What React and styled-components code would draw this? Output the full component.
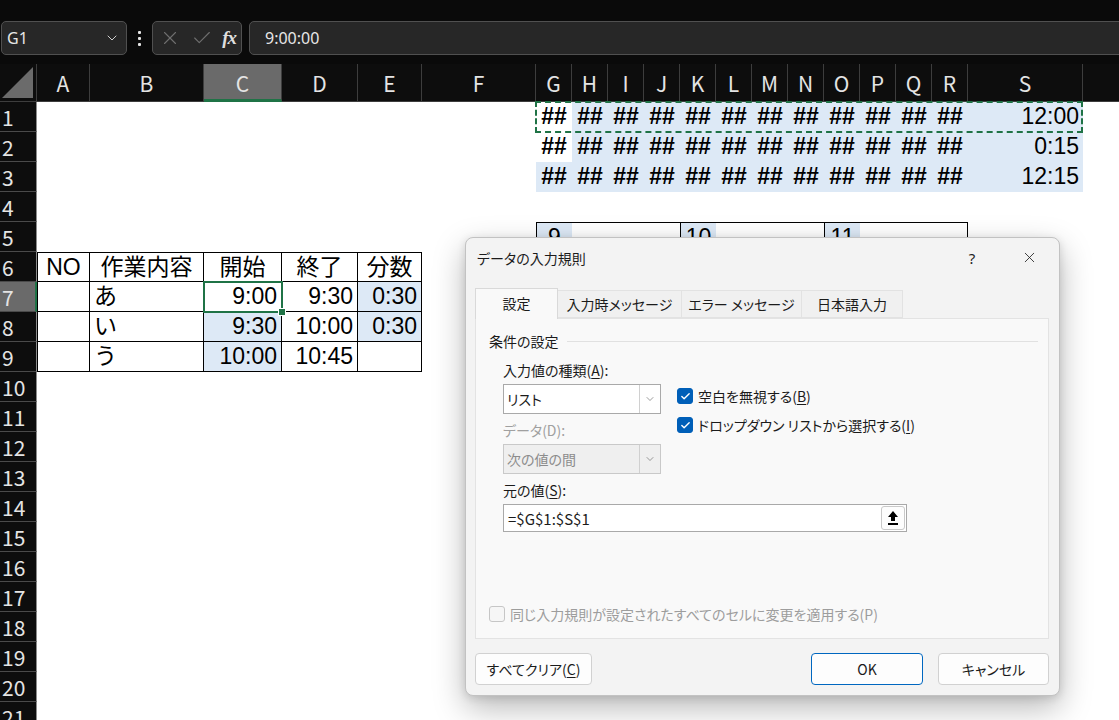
import React from 'react';
import styled, { createGlobalStyle } from 'styled-components';
import { X, Check, ChevronDown } from 'lucide-react';

const BLUE = '#dde9f6';
const GREEN = '#1f7346';
const UI_FONT = '"Noto Sans CJK JP", "Noto Sans", sans-serif';
const CELL_FONT = '"Liberation Sans", "Noto Sans CJK JP", sans-serif';

const Global = createGlobalStyle`
  html, body { margin: 0; padding: 0; background: #0a0a0a; }
  body { width: 1119px; height: 720px; overflow: hidden; font-family: ${UI_FONT}; }
`;

const Page = styled.div`
  position: relative;
  width: 1119px;
  height: 720px;
  overflow: hidden;
  background: #0a0a0a;
  display: flex;
  flex-direction: column;
`;

/* ---------- formula bar ---------- */
const FormulaBar = styled.div`
  display: flex;
  align-items: center;
  height: 34px;
  margin-top: 21px;
  padding-left: 1px;
`;

const Box = styled.div`
  box-sizing: border-box;
  height: 34px;
  background: #272727;
  border: 1px solid #505050;
  border-radius: 5px;
  display: flex;
  align-items: center;
  color: #e6e6e6;
`;

const NameBox = styled(Box)`
  width: 126px;
  justify-content: space-between;
  padding: 0 6px 0 5px;
  font: 16px "Noto Sans", sans-serif;
`;

const Dots = styled.div`
  width: 25px;
  display: flex;
  flex-direction: column;
  align-items: center;
  gap: 3px;
  span { width: 3px; height: 3px; background: #e6e6e6; border-radius: 1px; }
`;

const FxBox = styled(Box)`
  width: 90px;
  justify-content: space-between;
  padding: 0 5px 0 6px;
`;

const Fx = styled.span`
  font: italic bold 19px "Liberation Serif", serif;
  color: #dedede;
  letter-spacing: -1px;
`;

const FormulaInput = styled(Box)`
  flex: 1;
  margin-left: 7px;
  margin-right: -10px;
  padding-left: 15px;
  font: 16px "Noto Sans", sans-serif;
`;

/* ---------- sheet ---------- */
const COLS = ['A', 'B', 'C', 'D', 'E', 'F', 'G', 'H', 'I', 'J', 'K', 'L', 'M', 'N', 'O', 'P', 'Q', 'R', 'S', 'T'];
const WIDTHS = [53, 114, 78, 76, 64, 114, ...Array(12).fill(36), 115, 100];
const ROWS = Array.from({ length: 21 }, (_, i) => i + 1);

const Sheet = styled.div`
  margin-top: 9px;
  display: grid;
  grid-template-columns: 37px ${WIDTHS.map((w) => `${w}px`).join(' ')};
  grid-template-rows: 38px repeat(21, 30px);
  background: #fff;
`;

const Placed = styled.div`
  grid-column: ${(p) => p.$c};
  grid-row: ${(p) => p.$r};
`;

const Corner = styled(Placed)`
  background: #0d0d0d;
  border-right: 1px solid #3d3d3d;
  border-bottom: 1px solid #3d3d3d;
  display: flex;
  align-items: flex-end;
  justify-content: flex-end;
  padding: 0 3px 3px 0;
  &::after {
    content: '';
    width: 31px;
    height: 31px;
    background: #6b6b6b;
    clip-path: polygon(100% 0, 100% 100%, 0 100%);
  }
`;

const ColHead = styled(Placed)`
  box-sizing: border-box;
  background: ${(p) => (p.$sel ? '#6a6a6a' : '#0d0d0d')};
  border-right: 1px solid #3d3d3d;
  border-bottom: ${(p) => (p.$sel ? `3px solid ${GREEN}` : '1px solid #3d3d3d')};
  color: #e4e4e4;
  font: 21px ${UI_FONT};
  display: flex;
  align-items: center;
  justify-content: center;
  padding-top: ${(p) => (p.$sel ? '2px' : '0')};
  overflow: hidden;
`;

const RowHead = styled(Placed)`
  box-sizing: border-box;
  background: ${(p) => (p.$sel ? '#6a6a6a' : '#0d0d0d')};
  border-bottom: 1px solid #4a4a4a;
  border-right: ${(p) => (p.$sel ? `2px solid ${GREEN}` : '1px solid #8c8c8c')};
  color: #e4e4e4;
  font: 21px/28px ${UI_FONT};
  padding-left: 2px;
  display: flex;
  align-items: center;
`;

const Cell = styled(Placed)`
  box-sizing: border-box;
  background: ${(p) => p.$bg || '#fff'};
  border-top: ${(p) => (p.$bt ? '1px solid #000' : 'none')};
  border-bottom: ${(p) => (p.$bb ? '1px solid #000' : 'none')};
  border-left: ${(p) => (p.$bl ? '1px solid #000' : 'none')};
  border-right: ${(p) => (p.$br ? '1px solid #000' : 'none')};
  font: ${(p) => (p.$bold ? 'bold ' : '')}23px/29px ${CELL_FONT};
  color: #000;
  text-align: ${(p) => p.$align || 'left'};
  padding: 0 4px;
  white-space: nowrap;
  overflow: hidden;
`;

const MarchingAnts = styled.div`
  grid-column: 8 / 21;
  grid-row: 2 / 3;
  border: 2px dashed ${GREEN};
  margin: -1px 0 -1px -1px;
  pointer-events: none;
  z-index: 1;
`;

const ActiveCell = styled.div`
  grid-column: 4 / 5;
  grid-row: 8 / 9;
  border: 2px solid ${GREEN};
  margin: -1px;
  position: relative;
  z-index: 2;
  &::after {
    content: '';
    position: absolute;
    right: -5px;
    bottom: -5px;
    width: 6px;
    height: 6px;
    background: ${GREEN};
    border: 1px solid #fff;
  }
`;

const cells = {};
const GR = COLS.slice(6, 18);
[1, 2, 3].forEach((r) =>
  GR.forEach((c) => {
    cells[c + r] = { t: '##', align: 'center', bold: true, bg: c === 'G' && r < 3 ? null : BLUE };
  })
);
cells.S1 = { t: '12:00', align: 'right', bg: BLUE };
cells.S2 = { t: '0:15', align: 'right', bg: BLUE };
cells.S3 = { t: '12:15', align: 'right', bg: BLUE };

GR.forEach((c) => {
  cells[c + 5] = { bt: true };
});
cells.G5 = { t: '9', align: 'center', bg: BLUE, bt: true, bl: true };
cells.K5 = { t: '10', align: 'center', bg: BLUE, bt: true, bl: true };
cells.O5 = { t: '11', align: 'center', bg: BLUE, bt: true, bl: true };
cells.R5 = { bt: true, br: true };

const table = {
  6: [['NO', 'center'], ['作業内容', 'center'], ['開始', 'center'], ['終了', 'center'], ['分数', 'center']],
  7: [['', 'left'], ['あ', 'left'], ['9:00', 'right'], ['9:30', 'right'], ['0:30', 'right', BLUE]],
  8: [['', 'left'], ['い', 'left'], ['9:30', 'right', BLUE], ['10:00', 'right'], ['0:30', 'right', BLUE]],
  9: [['', 'left'], ['う', 'left'], ['10:00', 'right', BLUE], ['10:45', 'right'], ['', 'left']],
};
Object.entries(table).forEach(([r, list]) => {
  list.forEach(([t, align, bg], i) => {
    cells[COLS[i] + r] = { t, align, bg, bb: true, br: true, bt: r === '6', bl: i === 0 };
  });
});

/* ---------- dialog ---------- */
const Dialog = styled.div`
  position: absolute;
  left: 465px;
  top: 237px;
  width: 595px;
  height: 459px;
  box-sizing: border-box;
  background: #f3f3f3;
  border: 1px solid #c2c2c2;
  border-radius: 8px;
  box-shadow: 0 12px 32px rgba(0, 0, 0, 0.28), 0 2px 8px rgba(0, 0, 0, 0.12);
  display: flex;
  flex-direction: column;
  padding: 0 10px 10px 9px;
  font: 14px ${UI_FONT};
  font-feature-settings: 'palt';
  color: #1b1b1b;
  z-index: 10;
`;

const TitleBar = styled.div`
  height: 39px;
  display: flex;
  align-items: center;
`;

const Title = styled.div`
  flex: 1;
  padding-left: 2px;
  font-size: 14px;
`;

const TitleBtn = styled.div`
  width: 40px;
  height: 39px;
  display: flex;
  align-items: center;
  justify-content: center;
  margin-right: ${(p) => p.$mr || 0}px;
  font: 15px "Noto Sans", sans-serif;
  color: #222;
`;

const Tabs = styled.div`
  display: flex;
  align-items: flex-end;
  margin-top: 11px;
  height: 30px;
  position: relative;
  z-index: 1;
`;

const Tab = styled.div`
  box-sizing: border-box;
  width: ${(p) => p.$w}px;
  height: ${(p) => (p.$active ? 31 : 28)}px;
  margin-bottom: ${(p) => (p.$active ? -1 : 0)}px;
  background: ${(p) => (p.$active ? '#f9f9f9' : '#f0f0f0')};
  border: 1px solid ${(p) => (p.$active ? '#d9d9d9' : '#e2e2e2')};
  border-bottom: ${(p) => (p.$active ? 'none' : '1px solid #e2e2e2')};
  border-left: ${(p) => (p.$first ? undefined : 'none')};
  display: flex;
  align-items: center;
  justify-content: center;
  padding-bottom: ${(p) => (p.$active ? 2 : 0)}px;
  font-size: 14px;
  white-space: nowrap;
`;

const Panel = styled.div`
  box-sizing: border-box;
  height: 321px;
  background: #f9f9f9;
  border: 1px solid #e3e3e3;
  padding: 13px 10px 15px 13px;
  display: flex;
  flex-direction: column;
`;

const Group = styled.div`
  display: flex;
  align-items: center;
  gap: 8px;
  line-height: 18px;
  &::after {
    content: '';
    flex: 1;
    border-top: 1px solid #e1e1e1;
  }
`;

const Inner = styled.div`
  margin-left: 14px;
  display: flex;
  flex-direction: column;
`;

const Row = styled.div`
  display: flex;
  margin-top: 11px;
`;

const LeftCol = styled.div`
  width: 158px;
  display: flex;
  flex-direction: column;
`;

const RightCol = styled.div`
  margin-left: 16px;
  padding-top: 26px;
  display: flex;
  flex-direction: column;
  gap: 11px;
`;

const Label = styled.div`
  line-height: 18px;
  color: ${(p) => (p.$disabled ? '#a0a0a0' : '#1b1b1b')};
  margin-top: ${(p) => p.$mt || 0}px;
`;

const U = styled.span`
  text-decoration: underline;
  text-underline-offset: 2px;
`;

const Select = styled.div`
  box-sizing: border-box;
  height: 30px;
  margin-top: 5px;
  background: ${(p) => (p.$disabled ? '#efefef' : '#fff')};
  border: 1px solid ${(p) => (p.$disabled ? '#c9c9c9' : '#a9a9a9')};
  display: flex;
  align-items: stretch;
  color: ${(p) => (p.$disabled ? '#8c8c8c' : '#1b1b1b')};
  font-size: 14px;
`;

const SelectText = styled.div`
  flex: 1;
  display: flex;
  align-items: center;
  padding-left: 3px;
`;

const DropBtn = styled.div`
  width: 20px;
  border-left: 1px solid #d0d0d0;
  display: flex;
  align-items: center;
  justify-content: center;
  color: #666;
`;

const CheckRow = styled.div`
  display: flex;
  align-items: center;
  gap: 5px;
  line-height: 18px;
  color: ${(p) => (p.$disabled ? '#9d9d9d' : '#1b1b1b')};
`;

const CheckBox = styled.div`
  box-sizing: border-box;
  width: 16px;
  height: 16px;
  border-radius: 3px;
  background: ${(p) => (p.$checked ? '#005fb8' : '#f6f6f6')};
  border: 1px solid ${(p) => (p.$checked ? '#005fb8' : '#c6c6c6')};
  display: flex;
  align-items: center;
  justify-content: center;
  color: #fff;
`;

const SourceInput = styled.div`
  box-sizing: border-box;
  width: 404px;
  height: 28px;
  margin-top: 5px;
  background: #fff;
  border: 1px solid #a9a9a9;
  display: flex;
  align-items: center;
  padding: 0 1px 0 4px;
  font: 15px ${UI_FONT};
`;

const SourceText = styled.div`
  flex: 1;
`;

const RefBtn = styled.div`
  box-sizing: border-box;
  width: 24px;
  height: 24px;
  border: 1px solid #c9c9c9;
  border-radius: 3px;
  background: #fdfdfd;
  display: flex;
  align-items: center;
  justify-content: center;
`;

const Footer = styled.div`
  margin-top: auto;
`;

const ButtonRow = styled.div`
  display: flex;
  margin-top: 14px;
  gap: 15px;
`;

const Button = styled.div`
  box-sizing: border-box;
  width: ${(p) => p.$w}px;
  height: 32px;
  margin-left: ${(p) => (p.$push ? 'auto' : '0')};
  background: #fdfdfd;
  border: 1px solid ${(p) => (p.$primary ? '#0067c0' : '#d1d1d1')};
  border-radius: 4px;
  display: flex;
  align-items: center;
  justify-content: center;
  font-size: 14px;
`;

const TABS = [
  ['設定', 83],
  ['入力時メッセージ', 124],
  ['エラー メッセージ', 120],
  ['日本語入力', 101],
];

function RefIcon() {
  return (
    <svg width="12" height="16" viewBox="0 0 12 16">
      <polygon points="6,1 11,7 8,7 8,11 4,11 4,7 1,7" fill="#000" />
      <rect x="1" y="13" width="10" height="2" fill="#000" />
    </svg>
  );
}

function ValidationDialog() {
  return (
    <Dialog>
      <TitleBar>
        <Title>データの入力規則</Title>
        <TitleBtn $mr={17}>?</TitleBtn>
        <TitleBtn>
          <X size={17} strokeWidth={1.2} />
        </TitleBtn>
      </TitleBar>
      <Tabs>
        {TABS.map(([t, w], i) => (
          <Tab key={t} $w={w} $active={i === 0} $first={i === 0}>
            {t}
          </Tab>
        ))}
      </Tabs>
      <Panel>
        <Group>条件の設定</Group>
        <Inner>
          <Row>
            <LeftCol>
              <Label>
                入力値の種類(<U>A</U>):
              </Label>
              <Select>
                <SelectText>リスト</SelectText>
                <DropBtn>
                  <ChevronDown size={12} strokeWidth={1.3} />
                </DropBtn>
              </Select>
              <Label $disabled $mt={7}>
                データ(D):
              </Label>
              <Select $disabled>
                <SelectText>次の値の間</SelectText>
                <DropBtn>
                  <ChevronDown size={12} strokeWidth={1.3} />
                </DropBtn>
              </Select>
            </LeftCol>
            <RightCol>
              <CheckRow>
                <CheckBox $checked>
                  <Check size={11} strokeWidth={3} />
                </CheckBox>
                <span>
                  空白を無視する(<U>B</U>)
                </span>
              </CheckRow>
              <CheckRow>
                <CheckBox $checked>
                  <Check size={11} strokeWidth={3} />
                </CheckBox>
                <span>
                  ドロップダウン リストから選択する(<U>I</U>)
                </span>
              </CheckRow>
            </RightCol>
          </Row>
          <Label $mt={7}>
            元の値(<U>S</U>):
          </Label>
          <SourceInput>
            <SourceText>=$G$1:$S$1</SourceText>
            <RefBtn>
              <RefIcon />
            </RefBtn>
          </SourceInput>
        </Inner>
        <Footer>
          <CheckRow $disabled>
            <CheckBox />
            <span>同じ入力規則が設定されたすべてのセルに変更を適用する(P)</span>
          </CheckRow>
        </Footer>
      </Panel>
      <ButtonRow>
        <Button $w={117}>
          すべてクリア(<U>C</U>)
        </Button>
        <Button $w={112} $push $primary>
          OK
        </Button>
        <Button $w={111}>キャンセル</Button>
      </ButtonRow>
    </Dialog>
  );
}

export default function App() {
  return (
    <Page>
      <Global />
      <FormulaBar>
        <NameBox>
          <span>G1</span>
          <ChevronDown size={16} strokeWidth={1.5} color="#d0d0d0" />
        </NameBox>
        <Dots>
          <span />
          <span />
          <span />
        </Dots>
        <FxBox>
          <X size={22} strokeWidth={1.2} color="#6f6f6f" />
          <Check size={22} strokeWidth={1.2} color="#6f6f6f" />
          <Fx>fx</Fx>
        </FxBox>
        <FormulaInput>9:00:00</FormulaInput>
      </FormulaBar>
      <Sheet>
        <Corner $c={1} $r={1} />
        {COLS.map((c, ci) => (
          <ColHead key={c} $c={ci + 2} $r={1} $sel={c === 'C'}>
            {c === 'T' ? '' : c}
          </ColHead>
        ))}
        {ROWS.map((r) => (
          <React.Fragment key={r}>
            <RowHead $c={1} $r={r + 1} $sel={r === 7}>
              {r}
            </RowHead>
            {COLS.map((c, ci) => {
              const d = cells[c + r] || {};
              return (
                <Cell
                  key={c + r}
                  $c={ci + 2}
                  $r={r + 1}
                  $bg={d.bg}
                  $bold={d.bold}
                  $align={d.align}
                  $bt={d.bt}
                  $bb={d.bb}
                  $bl={d.bl}
                  $br={d.br}
                >
                  {d.t || ''}
                </Cell>
              );
            })}
          </React.Fragment>
        ))}
        <MarchingAnts />
        <ActiveCell />
      </Sheet>
      <ValidationDialog />
    </Page>
  );
}
